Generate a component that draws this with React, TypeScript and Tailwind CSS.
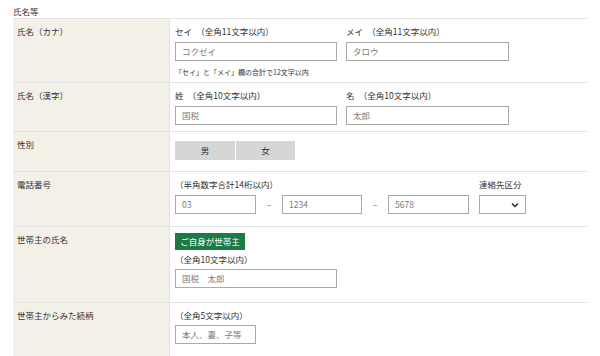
import React from "react"

const font = { fontFamily: '"Noto Sans CJK JP", "Noto Sans", sans-serif' }

function Field({ value, w }: { value: string; w: string }) {
  return (
    <div className={`${w} h-[19px] border border-[#a9a9a9] bg-white flex items-center pl-[6px] text-[8.5px] text-[#7a7a7a]`}>
      {value}
    </div>
  )
}

function Row({ label, h, children }: { label: string; h: string; children: React.ReactNode }) {
  return (
    <div className={`flex ${h} border-b border-[#e3e3e3]`}>
      <div className="w-[157px] shrink-0 bg-[#f3f0e7] border-r border-[#e6e3da] pl-[4px] pt-[6px] text-[8.5px] leading-[12px] text-[#333]">
        {label}
      </div>
      <div className="flex-1 pl-[5px] pt-[6px] text-[8.5px] text-[#333]">{children}</div>
    </div>
  )
}

export default function App() {
  return (
    <div className="w-[600px] h-[356px] bg-white overflow-hidden" style={font}>
      <div className="pl-[13px] pt-[4px] h-[18px] text-[8.5px] text-[#333] leading-[14px]">氏名等</div>
      <div className="ml-[13px] w-[574px] border-t border-[#e3e3e3]">
        <Row label="氏名（カナ）" h="h-[64px]">
          <div className="flex gap-[9px]">
            <div>
              <div className="leading-[12px]">セイ　（全角11文字以内）</div>
              <div className="mt-[5px]">
                <Field value="コクゼイ" w="w-[162px]" />
              </div>
            </div>
            <div>
              <div className="leading-[12px]">メイ　（全角11文字以内）</div>
              <div className="mt-[5px]">
                <Field value="タロウ" w="w-[163px]" />
              </div>
            </div>
          </div>
          <div className="mt-[6px] text-[7px] leading-[10px]">「セイ」と「メイ」欄の合計で12文字以内</div>
        </Row>
        <Row label="氏名（漢字）" h="h-[49px]">
          <div className="flex gap-[9px]">
            <div>
              <div className="leading-[12px]">姓　（全角10文字以内）</div>
              <div className="mt-[5px]">
                <Field value="国税" w="w-[162px]" />
              </div>
            </div>
            <div>
              <div className="leading-[12px]">名　（全角10文字以内）</div>
              <div className="mt-[5px]">
                <Field value="太郎" w="w-[163px]" />
              </div>
            </div>
          </div>
        </Row>
        <Row label="性別" h="h-[40px]">
          <div className="flex gap-[1px] mt-[3px]">
            <div className="w-[60px] h-[19px] bg-[#d6d6d6] flex items-center justify-center text-[8.5px]">男</div>
            <div className="w-[59px] h-[19px] bg-[#d6d6d6] flex items-center justify-center text-[8.5px]">女</div>
          </div>
        </Row>
        <Row label="電話番号" h="h-[55px]">
          <div className="flex items-end">
            <div>
              <div className="leading-[12px]">（半角数字合計14桁以内）</div>
              <div className="mt-[5px] flex items-center">
                <Field value="03" w="w-[81px]" />
                <span className="w-[26px] text-center text-[#666]">–</span>
                <Field value="1234" w="w-[80px]" />
                <span className="w-[26px] text-center text-[#666]">–</span>
                <Field value="5678" w="w-[81px]" />
              </div>
            </div>
            <div className="ml-[10px]">
              <div className="leading-[12px]">連絡先区分</div>
              <div className="mt-[5px] w-[47px] h-[19px] border border-[#a9a9a9] bg-white flex items-center justify-end pr-[6px]">
                <svg width="8" height="6" viewBox="0 0 8 6">
                  <path d="M1 1.5 L4 4.5 L7 1.5" fill="none" stroke="#222" strokeWidth="1.4" />
                </svg>
              </div>
            </div>
          </div>
        </Row>
        <Row label="世帯主の氏名" h="h-[76px]">
          <div className="w-[70px] h-[17px] bg-[#1d7a45] text-white flex items-center justify-center text-[8.5px]">
            ご自身が世帯主
          </div>
          <div className="mt-[3px] leading-[12px]">（全角10文字以内）</div>
          <div className="mt-[4px]">
            <Field value="国税　太郎" w="w-[162px]" />
          </div>
        </Row>
        <Row label="世帯主からみた続柄" h="h-[60px]">
          <div className="leading-[12px]">（全角5文字以内）</div>
          <div className="mt-[4px]">
            <Field value="本人、妻、子等" w="w-[81px]" />
          </div>
        </Row>
      </div>
    </div>
  )
}
